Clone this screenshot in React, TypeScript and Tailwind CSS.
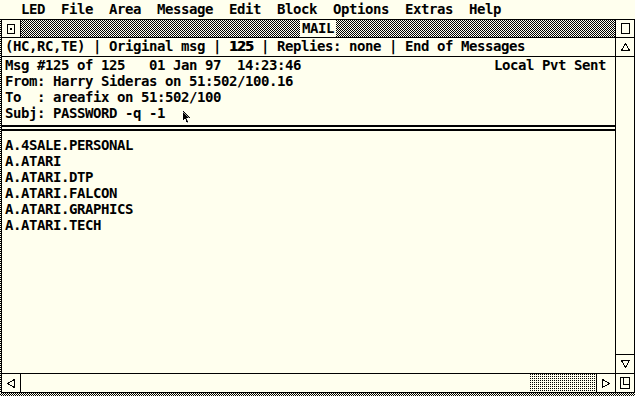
import React from "react";

const checker =
  "bg-[image:repeating-conic-gradient(#000_0_25%,#ffffee_0_50%)] bg-[length:2px_2px]";
const sparse =
  "bg-[image:repeating-conic-gradient(#000_0_25%,#ffffee_0_100%)] bg-[length:2px_2px]";

function Tri({ points, w, h }: { points: string; w: number; h: number }) {
  return (
    <svg width={w} height={h} viewBox={`0 0 ${w} ${h}`} shapeRendering="crispEdges">
      <polygon points={points} fill="none" stroke="#000" strokeWidth={1} />
    </svg>
  );
}

export default function App() {
  const header = [
    "From: Harry Sideras on 51:502/100.16",
    "To  : areafix on 51:502/100",
    "Subj: PASSWORD -q -1",
  ];
  const areas = [
    "A.4SALE.PERSONAL",
    "A.ATARI",
    "A.ATARI.DTP",
    "A.ATARI.FALCON",
    "A.ATARI.GRAPHICS",
    "A.ATARI.TECH",
  ];
  return (
    <div className="relative w-[635px] h-[396px] bg-[#ffffee] flex flex-col overflow-hidden text-black font-['DejaVu_Sans_Mono','Liberation_Mono',monospace] text-[14px] leading-[16px] font-bold tracking-[-0.43px] whitespace-pre">
      {/* Menu bar */}
      <div className="h-[20px] shrink-0 border-b border-black pl-[21px] pt-[1px]">
        LED  File  Area  Message  Edit  Block  Options  Extras  Help
      </div>

      {/* Desktop + window */}
      <div className="flex h-[373px] shrink-0">
        <div className={`w-[1px] shrink-0 ${checker}`} />
        <div className="w-[634px] flex flex-col border-l border-r border-b border-black">
          {/* Title bar */}
          <div className="h-[18px] shrink-0 flex border-b border-black">
            <div className="w-[19px] shrink-0 border-r border-black flex items-center justify-center">
              <svg width={8} height={10} viewBox="0 0 8 10" shapeRendering="crispEdges">
                <rect x={0.5} y={0.5} width={7} height={9} fill="none" stroke="#000" />
                <rect x={3} y={4} width={2} height={2} fill="#000" />
              </svg>
            </div>
            <div className={`flex-1 flex justify-center ${checker}`}>
              <span className="bg-[#ffffee] px-[2px] h-[17px]">MAIL</span>
            </div>
            <div className="w-[19px] shrink-0 border-l border-black flex items-center justify-center">
              <svg width={9} height={11} viewBox="0 0 9 11" shapeRendering="crispEdges">
                <rect x={0.5} y={0.5} width={8} height={10} fill="none" stroke="#000" />
              </svg>
            </div>
          </div>

          {/* Body */}
          <div className="flex-1 flex min-h-0">
            <div className="flex-1 flex flex-col min-w-0">
              <div className="h-[19px] shrink-0 border-b border-black pl-[3px]">
                (HC,RC,TE) | Original msg | <span className="[text-shadow:1px_0_0_#000]">125</span> | Replies: none | End of Messages
              </div>
              <div className="h-[68px] shrink-0 pl-[3px] pr-[9px] flex flex-col">
                <div className="flex justify-between">
                  <span>Msg #125 of 125   01 Jan 97  14:23:46</span>
                  <span>Local Pvt Sent</span>
                </div>
                {header.map((l) => (
                  <div key={l}>{l}</div>
                ))}
              </div>
              <div className="h-[6px] shrink-0 border-t-2 border-b-2 border-black" />
              <div className="pt-[6px] pl-[3px] flex flex-col">
                {areas.map((a) => (
                  <div key={a}>{a}</div>
                ))}
              </div>
            </div>
            <div className="w-[19px] shrink-0 border-l border-black flex flex-col">
              <div className="h-[19px] shrink-0 border-b border-black flex items-center justify-center">
                <Tri w={9} h={8} points="4.5,0.5 8.5,7.5 0.5,7.5" />
              </div>
              <div className="flex-1" />
              <div className="h-[19px] shrink-0 border-t border-black flex items-center justify-center">
                <Tri w={9} h={8} points="0.5,0.5 8.5,0.5 4.5,7.5" />
              </div>
            </div>
          </div>

          {/* Horizontal scroll bar */}
          <div className="h-[19px] shrink-0 border-t border-black flex">
            <div className="w-[19px] shrink-0 border-r border-black flex items-center justify-center">
              <Tri w={8} h={9} points="0.5,4.5 7.5,0.5 7.5,8.5" />
            </div>
            <div className="w-[508px] shrink-0" />
            <div className={`w-[67px] shrink-0 ${sparse}`} />
            <div className="w-[19px] shrink-0 border-l border-black flex items-center justify-center">
              <Tri w={8} h={9} points="0.5,0.5 7.5,4.5 0.5,8.5" />
            </div>
            <div className="w-[19px] shrink-0 border-l border-black flex items-center justify-center">
              <svg width={10} height={12} viewBox="0 0 10 12" shapeRendering="crispEdges">
                <rect x={0.5} y={0.5} width={9} height={11} fill="none" stroke="#000" />
                <path d="M3.5 0.5 V7.5 H9.5" fill="none" stroke="#000" />
              </svg>
            </div>
          </div>
        </div>
      </div>

      <div className={`h-[3px] shrink-0 ${checker}`} />

      {/* Mouse pointer */}
      <svg
        className="absolute left-[182px] top-[110px]"
        width={9}
        height={14}
        viewBox="0 0 9 14"
        shapeRendering="crispEdges"
      >
        <path d="M0.5 0.5 L0.5 11 L3 8.5 L5 13 L6.5 12.3 L4.6 8 L8 8 Z" fill="#000" stroke="#fff" strokeWidth={0.6} />
      </svg>
    </div>
  );
}
